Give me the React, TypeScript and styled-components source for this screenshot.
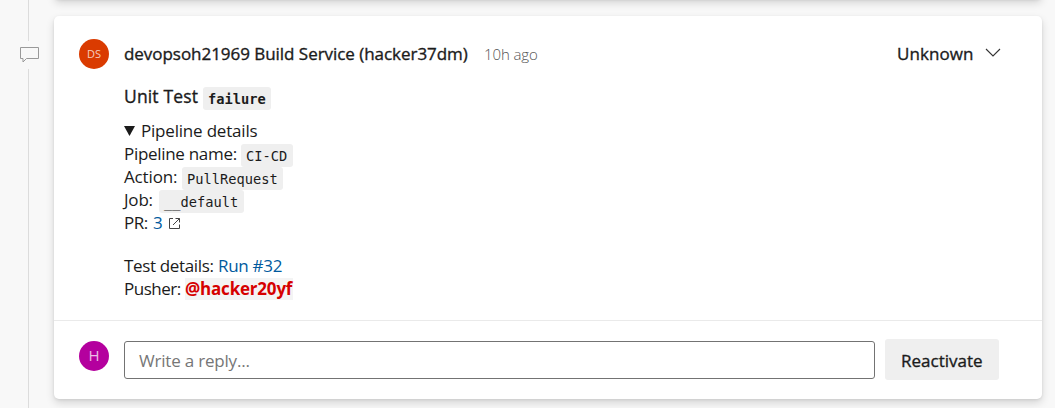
import React from "react";
import styled, { createGlobalStyle } from "styled-components";

const Global = createGlobalStyle`
  * { box-sizing: border-box; }
  body { margin: 0; background: #f8f8f8; overflow: hidden; }
`;

const Page = styled.div`
  display: flex;
  height: 408px;
  overflow: hidden;
  color: #1b1b1b;
  font: 400 17px/23px "Open Sans", "Noto Sans", sans-serif;
`;

const Timeline = styled.div`
  width: 54px;
  flex: none;
  display: flex;
  flex-direction: column;
  padding-left: 20px;
`;

const Rail = styled.div<{ $height?: number }>`
  width: 1px;
  margin-left: 8px;
  background: #dcdcdc;
  ${(p) => (p.$height ? `height: ${p.$height}px;` : "flex: 1;")}
`;

const RailIcon = styled.div`
  height: 28px;
  padding-top: 5px;
  svg { display: block; }
`;

const Thread = styled.main`
  width: 988px;
  display: flex;
  flex-direction: column;
  gap: 17px;
`;

const PreviousCard = styled.div`
  height: 10px;
  margin-top: -11px;
  flex: none;
  border-radius: 5px;
  background: #fff;
  box-shadow: 0 4px 9px rgba(0, 0, 0, 0.14), 0 1px 3px rgba(0, 0, 0, 0.12);
`;

const Card = styled.article`
  height: 383px;
  flex: none;
  border-radius: 5px;
  background: #fff;
  box-shadow: 0 4px 9px rgba(0, 0, 0, 0.14), 0 1px 3px rgba(0, 0, 0, 0.08);
`;

const Comment = styled.section`
  height: 305px;
  padding: 22px 41px 0 25px;
  border-bottom: 1px solid #eaeaea;
`;

const Header = styled.header`
  display: flex;
  align-items: center;
  height: 31px;
`;

const Avatar = styled.span<{ $color: string; $size: number }>`
  width: 30px;
  height: 30px;
  flex: none;
  margin-right: 15px;
  border-radius: 50%;
  background: ${(p) => p.$color};
  color: rgba(255, 255, 255, 0.75);
  font-size: ${(p) => p.$size}px;
  line-height: 29px;
  text-align: center;
`;

const Text = styled.span<{ $width: number; $spacing?: number }>`
  display: inline-block;
  width: ${(p) => p.$width}px;
  white-space: nowrap;
  letter-spacing: ${(p) => p.$spacing ?? 0}px;
`;

const StrongText = styled(Text)`
  -webkit-text-stroke: 0.35px currentColor;
`;

const Age = styled(Text)`
  padding-top: 1px;
  color: #555;
  font-size: 15px;
  font-weight: 300;
`;

const Status = styled.div`
  display: flex;
  align-items: center;
  margin-left: auto;
  svg { margin: 0 0 2px 12px; }
`;

const Body = styled.div`
  padding-left: 45px;
`;

const Title = styled.h3`
  display: flex;
  align-items: center;
  height: 23px;
  margin: 16px 0 11px;
  font: inherit;
  font-size: 17.5px;
`;

const Line = styled.div<{ $spaced?: boolean }>`
  display: flex;
  align-items: center;
  height: 23px;
  margin-top: ${(p) => (p.$spaced ? 20 : 0)}px;
`;

const Triangle = styled.svg`
  margin-right: 6px;
`;

const Code = styled.code<{ $width: number; $bold?: boolean }>`
  width: ${(p) => p.$width}px;
  height: 23px;
  flex: none;
  align-self: flex-start;
  margin-top: 2px;
  padding: 2px 0 0 5px;
  border-radius: 3px;
  background: #efefef;
  font: ${(p) => (p.$bold ? 700 : 400)} 13.7px/20px "DejaVu Sans Mono", monospace;
`;

const Link = styled.a<{ $width: number; $spacing?: number }>`
  width: ${(p) => p.$width}px;
  color: #005a9e;
  white-space: nowrap;
  letter-spacing: ${(p) => p.$spacing ?? 0}px;
`;

const Mention = styled.strong`
  width: 108px;
  height: 22px;
  background: #f4f4f4;
  color: #d60000;
  font-weight: 700;
  line-height: 22px;
  letter-spacing: -0.2px;
  white-space: nowrap;
`;

const Reply = styled.section`
  display: flex;
  padding: 18px 43px 0 25px;
`;

const ReplyAvatar = styled(Avatar)`
  margin-top: 2px;
`;

const Input = styled.div`
  width: 751px;
  height: 38px;
  margin-top: 2px;
  padding: 7px 14px;
  border: 1px solid #737373;
  border-radius: 3px;
  color: #767676;
`;

const Button = styled.button`
  width: 114px;
  height: 41px;
  margin-left: 10px;
  padding: 1px 0 0 16px;
  border: 0;
  border-radius: 3px;
  background: #efefef;
  color: #1b1b1b;
  font: inherit;
  line-height: 41px;
  text-align: left;
`;

export default function App() {
  return (
    <>
      <Global />
      <Page>
        <Timeline>
          <Rail $height={41} />
          <RailIcon>
            <svg width="19" height="17" viewBox="0 0 19 17" fill="none" stroke="#999">
              <path d="M.5 1.5h18v11H6.5l-3.5 3.5v-3.5H.5z" />
            </svg>
          </RailIcon>
          <Rail />
        </Timeline>
        <Thread>
          <PreviousCard />
          <Card>
            <Comment>
              <Header>
                <Avatar $color="#da3b01" $size={11}>DS</Avatar>
                <StrongText $width={360} $spacing={-0.04}>devopsoh21969 Build Service (hacker37dm)</StrongText>
                <Age $width={60} $spacing={-0.1}>10h ago</Age>
                <Status>
                  <StrongText $width={76} $spacing={0.05}>Unknown</StrongText>
                  <svg width="16" height="10" viewBox="0 0 16 10" fill="none" stroke="#333" strokeWidth="1.1">
                    <path d="M1 1l7 7 7-7" />
                  </svg>
                </Status>
              </Header>
              <Body>
                <Title>
                  <StrongText $width={79} $spacing={0.15}>Unit Test</StrongText>
                  <Code $width={68} $bold>failure</Code>
                </Title>
                <Line>
                  <Triangle width="11" height="10" viewBox="0 0 11 10"><path d="M0 0h11L5.5 10z" fill="#1b1b1b" /></Triangle>
                  <Text $width={120} $spacing={-0.2}>Pipeline details</Text>
                </Line>
                <Line><Text $width={117} $spacing={-0.3}>Pipeline name:</Text><Code $width={52}>CI-CD</Code></Line>
                <Line><Text $width={58} $spacing={-0.15}>Action:</Text><Code $width={101}>PullRequest</Code></Line>
                <Line><Text $width={35} $spacing={-0.2}>Job:</Text><Code $width={85}>__default</Code></Line>
                <Line>
                  <Text $width={29} $spacing={-0.5}>PR:</Text>
                  <Link $width={16}>3</Link>
                  <svg width="11" height="12" viewBox="0 0 11 12" fill="none" stroke="#444">
                    <path d="M4 1.5H.5v10h10v-4M6.5 1.5h4V5.5M10.5 1.5L4 8" />
                  </svg>
                </Line>
                <Line $spaced>
                  <Text $width={94} $spacing={-0.35}>Test details:</Text>
                  <Link $width={70} $spacing={-0.3}>Run #32</Link>
                </Line>
                <Line><Text $width={61} $spacing={-0.5}>Pusher:</Text><Mention>@hacker20yf</Mention></Line>
              </Body>
            </Comment>
            <Reply>
              <ReplyAvatar $color="#b4009e" $size={15}>H</ReplyAvatar>
              <Input><Text $width={120} $spacing={-0.2}>Write a reply...</Text></Input>
              <Button><StrongText $width={90} $spacing={0}>Reactivate</StrongText></Button>
            </Reply>
          </Card>
        </Thread>
      </Page>
    </>
  );
}
